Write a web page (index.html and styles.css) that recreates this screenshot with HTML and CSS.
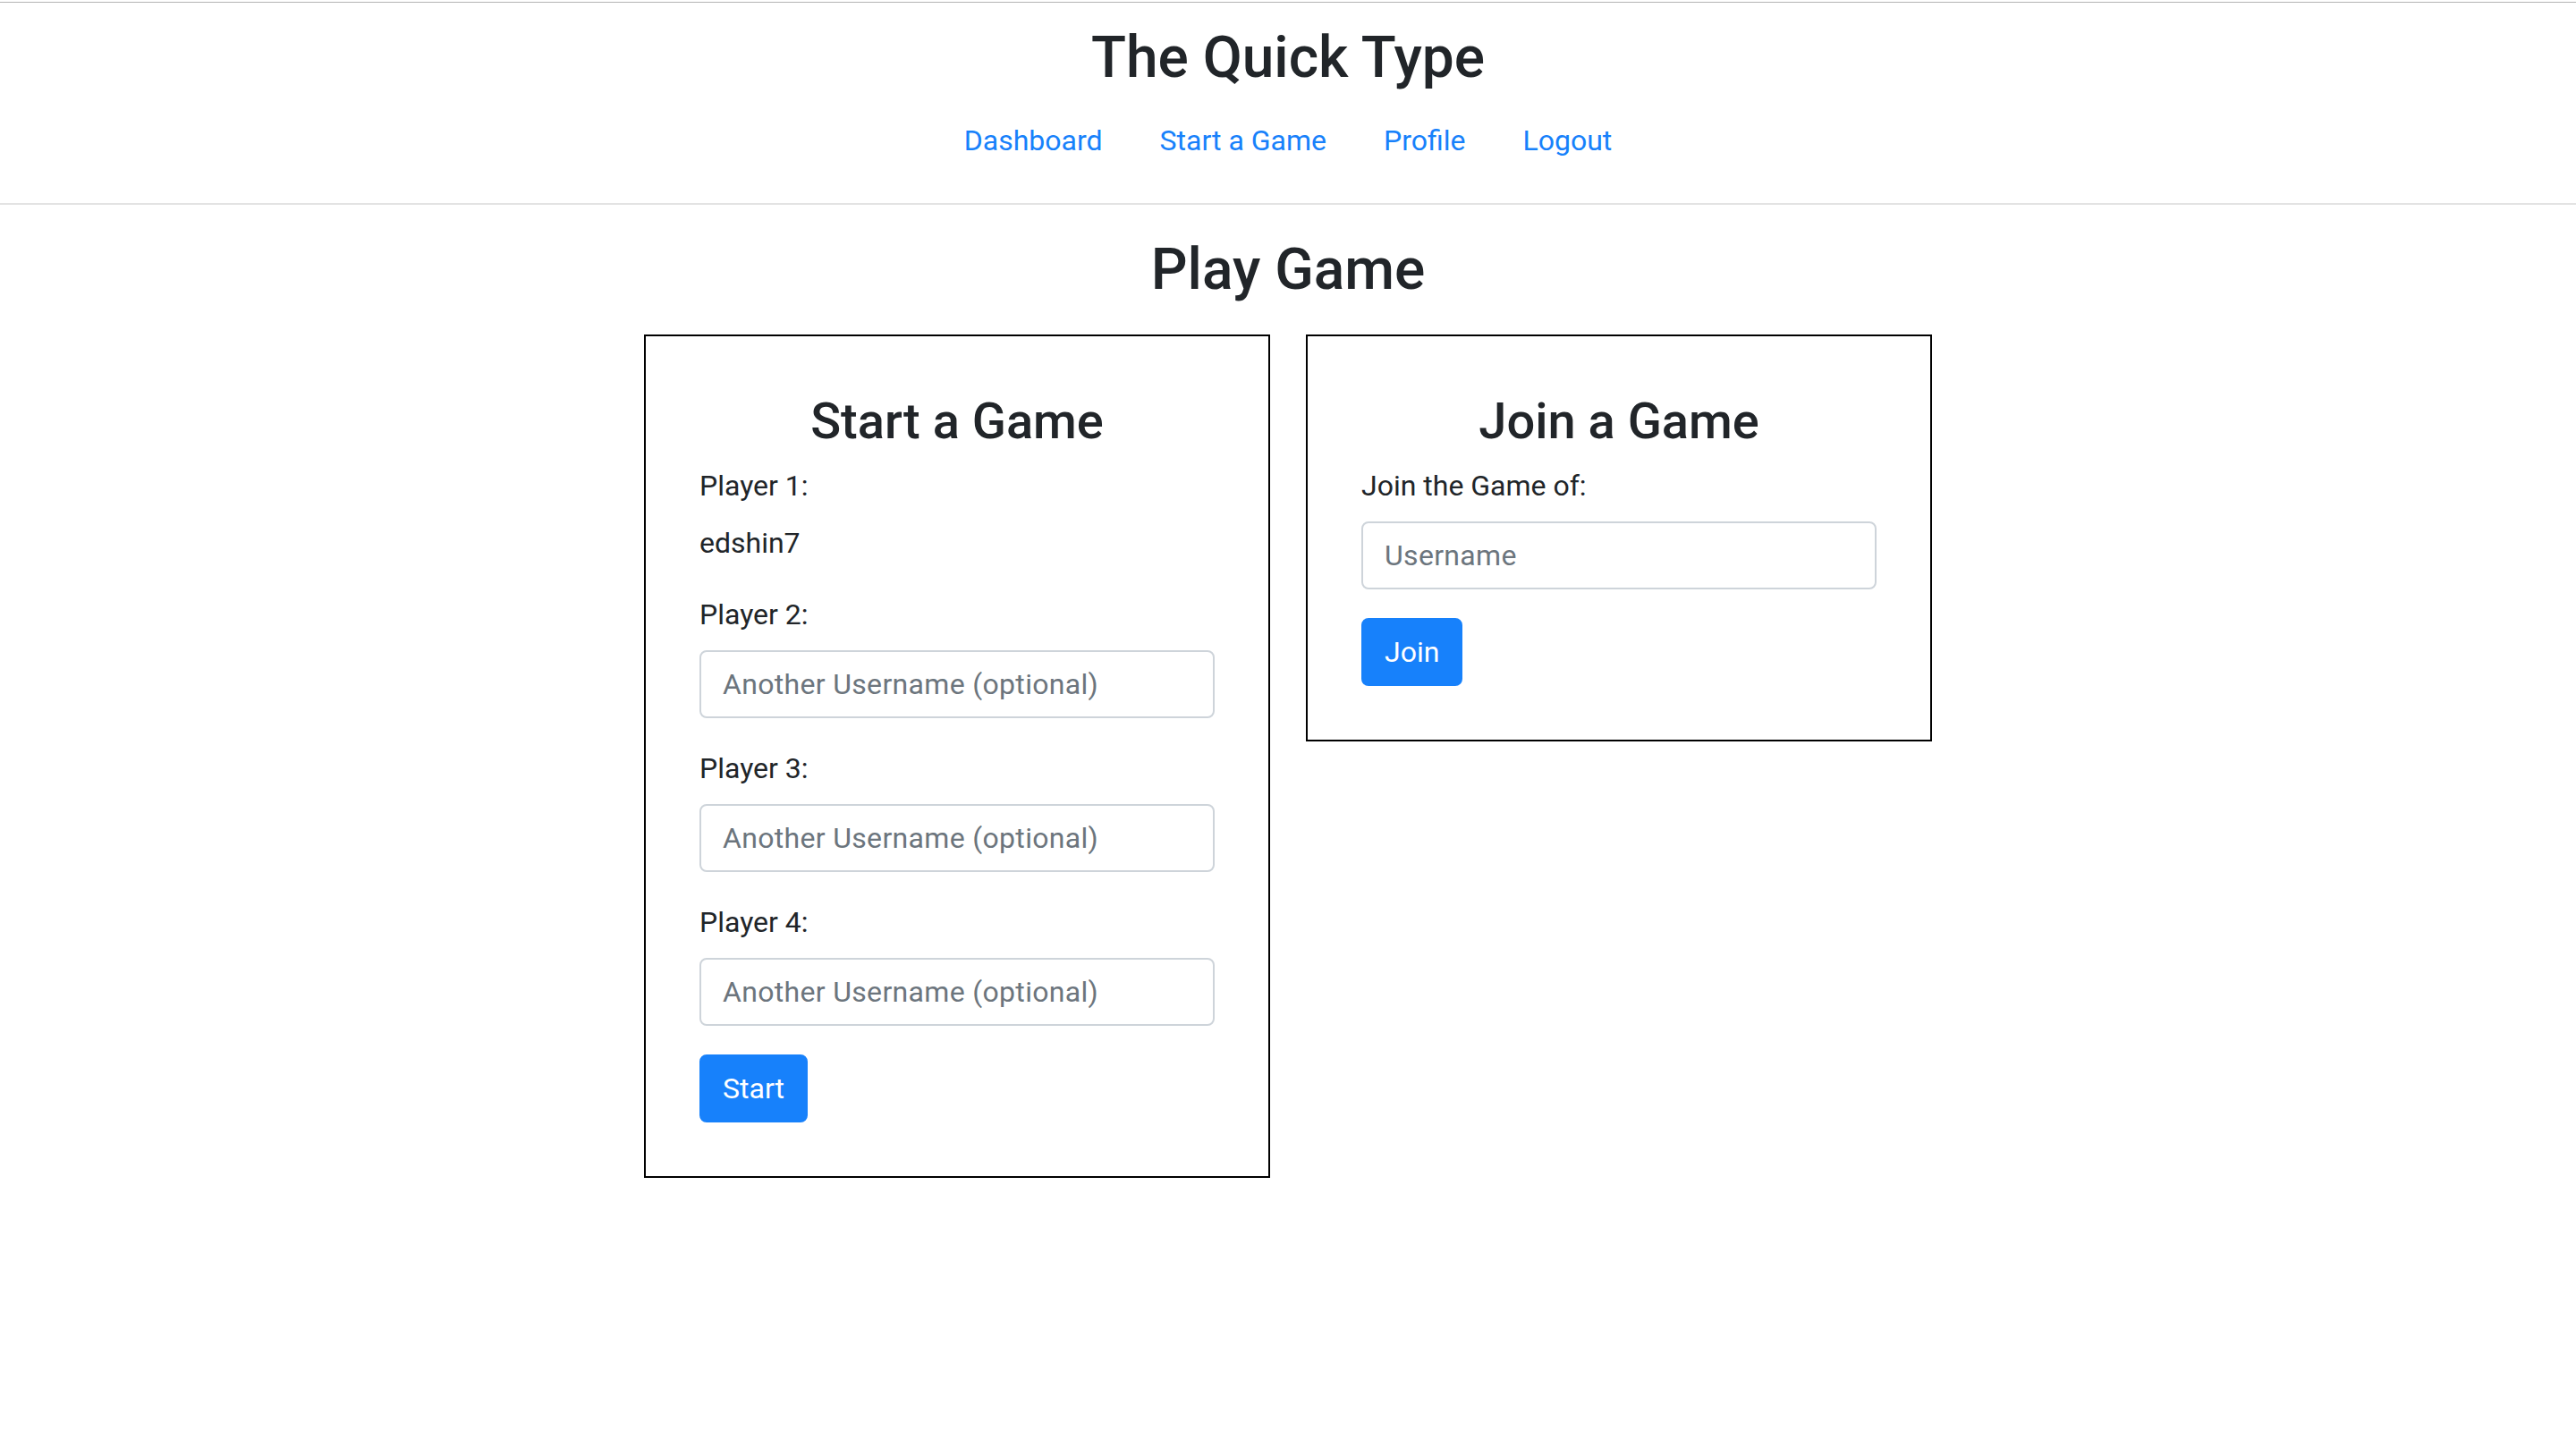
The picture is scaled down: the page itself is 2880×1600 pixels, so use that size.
FILE: index.html
```html
<!DOCTYPE html>
<html lang="en">
<head>
<meta charset="utf-8">
<title>The Quick Type</title>
<link rel="stylesheet" href="styles.css">
</head>
<body>
<div class="topline"></div>
<header class="site-header">
  <h2 class="site-title">The Quick Type</h2>
  <nav class="nav">
    <a class="nav-link" href="#">Dashboard</a>
    <a class="nav-link" href="#">Start a Game</a>
    <a class="nav-link" href="#">Profile</a>
    <a class="nav-link" href="#">Logout</a>
  </nav>
</header>
<main class="main">
  <h2 class="page-title">Play Game</h2>
  <div class="cards">
    <section class="card">
      <h3 class="card-title">Start a Game</h3>
      <div class="form-group">
        <label class="label">Player 1:</label>
        <div class="static">edshin7</div>
      </div>
      <div class="form-group">
        <label class="label">Player 2:</label>
        <input class="input" type="text" placeholder="Another Username (optional)">
      </div>
      <div class="form-group">
        <label class="label">Player 3:</label>
        <input class="input" type="text" placeholder="Another Username (optional)">
      </div>
      <div class="form-group">
        <label class="label">Player 4:</label>
        <input class="input" type="text" placeholder="Another Username (optional)">
      </div>
      <button class="btn" type="button">Start</button>
    </section>
    <section class="card">
      <h3 class="card-title">Join a Game</h3>
      <div class="form-group">
        <label class="label">Join the Game of:</label>
        <input class="input" type="text" placeholder="Username">
      </div>
      <button class="btn" type="button">Join</button>
    </section>
  </div>
</main>
</body>
</html>
```
FILE: styles.css
```css
* { box-sizing: border-box; }
html, body {
  margin: 0;
  padding: 0;
  background: #ffffff;
}
body {
  font-family: Roboto, Inter, "Noto Sans", "Liberation Sans", sans-serif;
  font-size: 32px;
  line-height: 1.5;
  color: #212529;
}
.topline {
  height: 3px;
  border-bottom: 1px solid #b4b4b4;
}
.site-header {
  text-align: center;
  padding-top: 24px;
  padding-bottom: 30px;
  border-bottom: 2px solid #e3e3e3;
}
.site-title {
  margin: 0 0 13px 0;
  font-size: 64px;
  font-weight: 500;
  line-height: 1.2;
}
.nav {
  display: flex;
  justify-content: center;
}
.nav-link {
  display: block;
  padding: 16px 32px;
  color: #1781fb;
  text-decoration: none;
}
.main {
  display: flex;
  flex-direction: column;
  align-items: center;
}
.page-title {
  margin: 35px 0 33px 0;
  font-size: 64px;
  font-weight: 500;
  line-height: 1.2;
}
.cards {
  display: flex;
  gap: 40px;
  align-items: flex-start;
}
.card {
  width: 700px;
  border: 2px solid #000;
  padding: 60px;
}
.card-title {
  margin: 0 0 14px 0;
  padding-top: 2px;
  text-align: center;
  font-size: 56px;
  font-weight: 500;
  line-height: 1.2;
}
.form-group {
  margin-bottom: 32px;
}
.label {
  display: block;
  margin-bottom: 16px;
}
.static {
  line-height: 48px;
}
.input {
  display: block;
  width: 100%;
  height: 76px;
  padding: 12px 24px;
  font-family: inherit;
  font-size: 32px;
  line-height: 48px;
  letter-spacing: 0.01em;
  color: #495057;
  border: 2px solid #ced4da;
  border-radius: 8px;
  background: #fff;
}
.input::placeholder {
  color: #6c757d;
}
.btn {
  display: inline-block;
  height: 76px;
  padding: 12px 24px;
  font-family: inherit;
  font-size: 32px;
  line-height: 48px;
  color: #fff;
  background: #1781fb;
  border: 2px solid #1781fb;
  border-radius: 8px;
}
```
